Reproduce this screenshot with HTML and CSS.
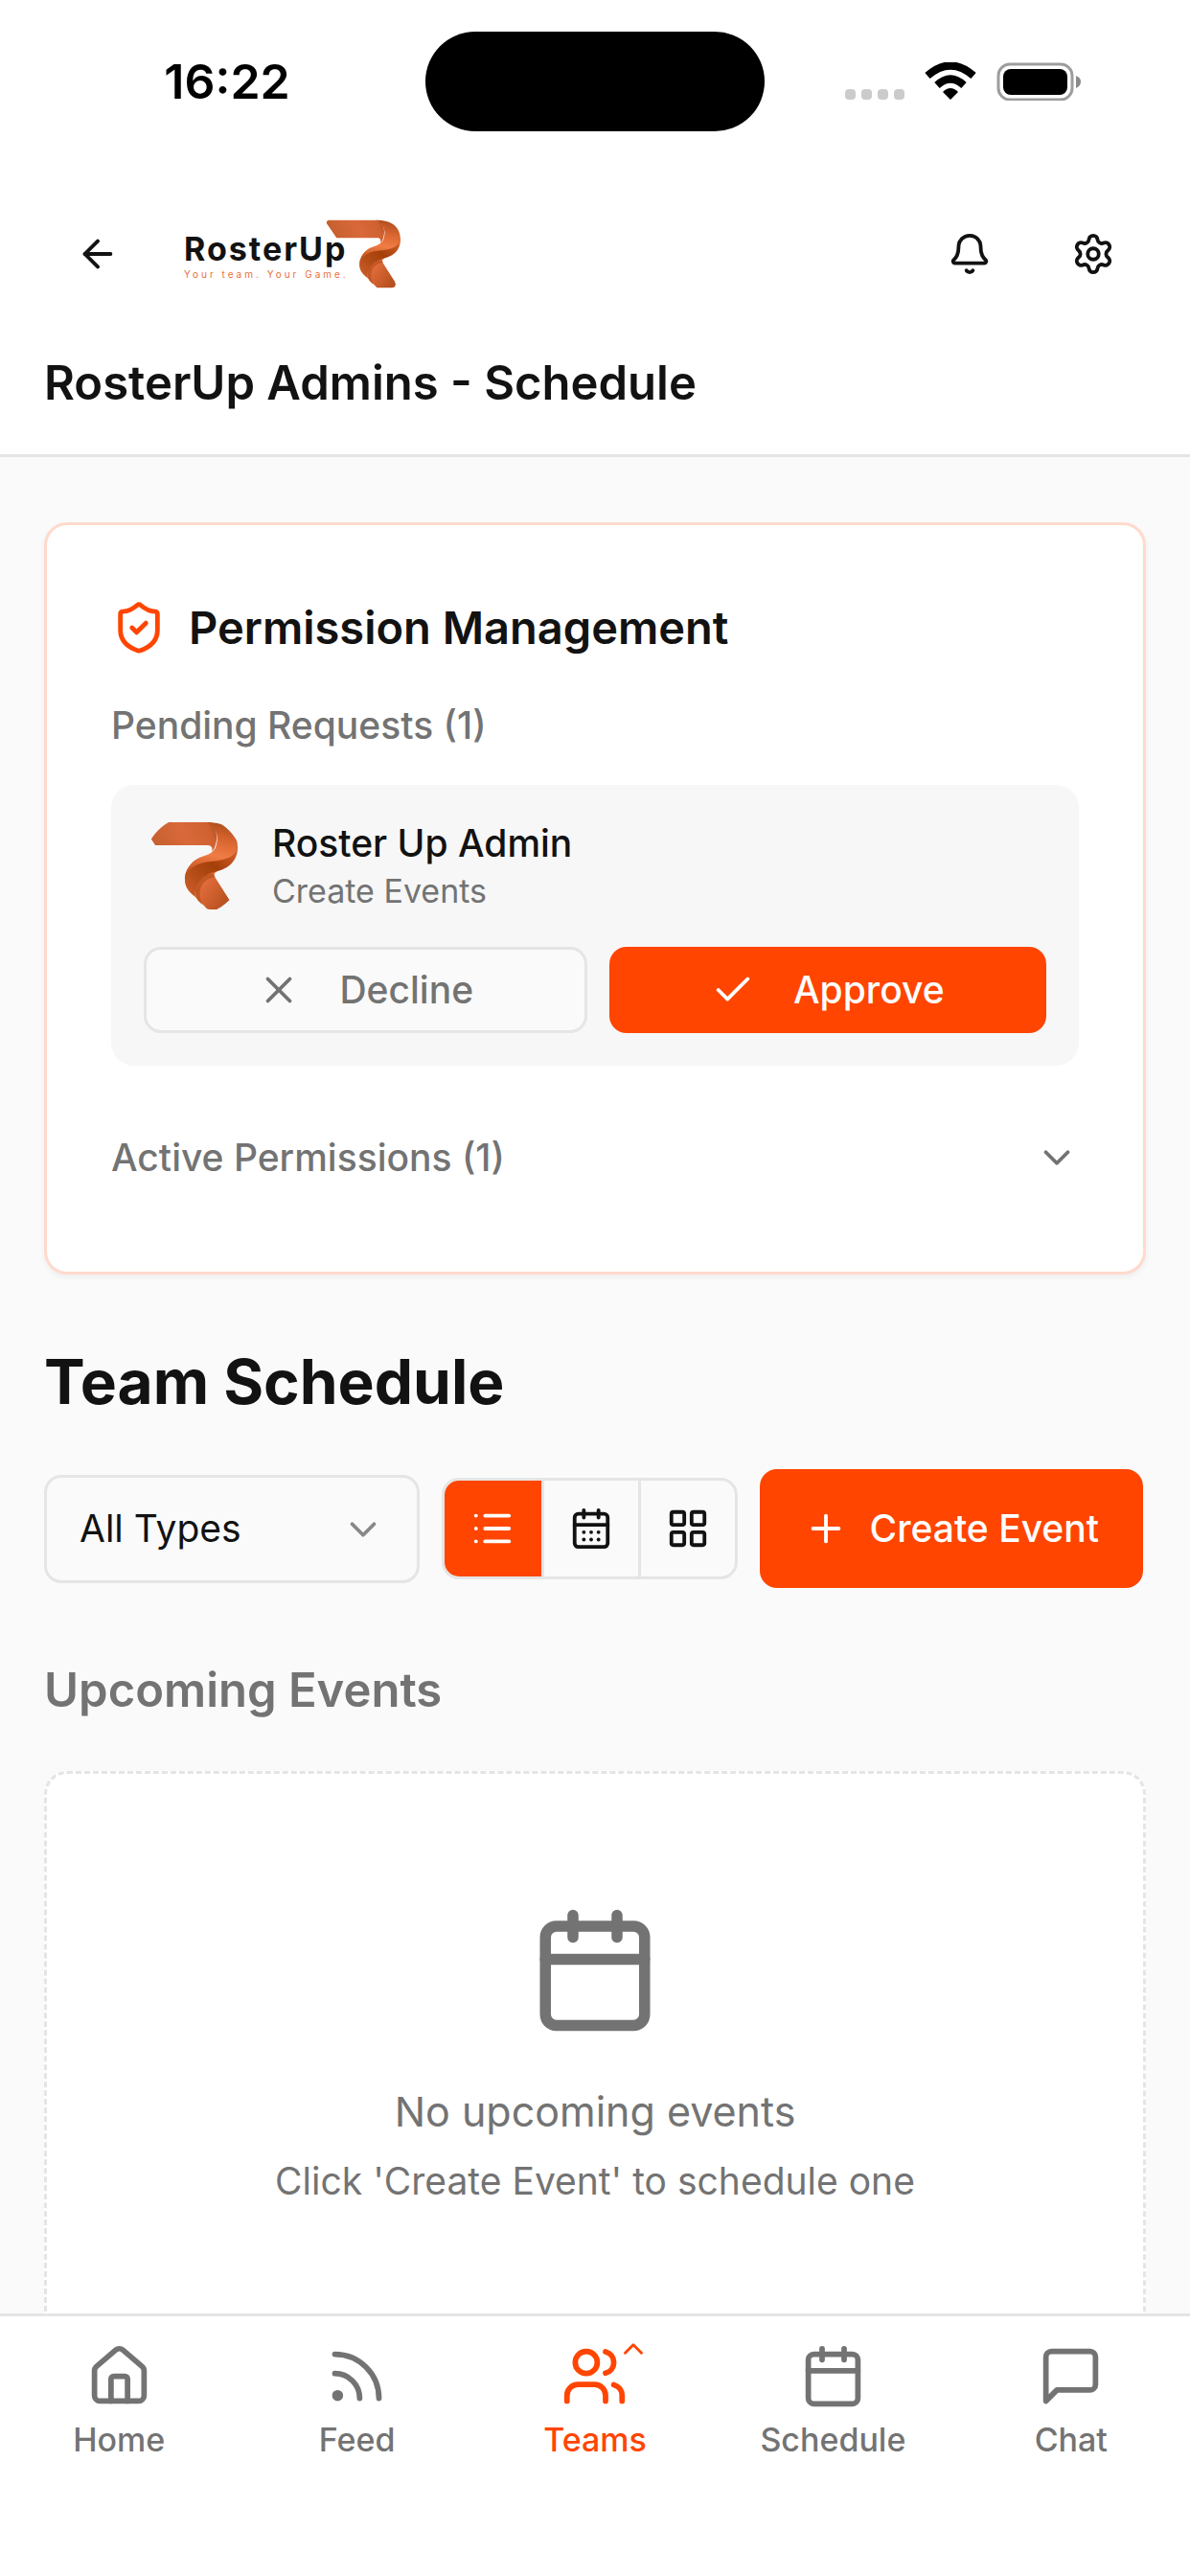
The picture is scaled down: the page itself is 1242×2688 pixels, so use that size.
FILE: index.html
```html
<!DOCTYPE html>
<html lang="en">
<head>
    <meta charset="UTF-8">
    <meta name="viewport" content="width=device-width, initial-scale=1">
    <title>RosterUp Admins - Schedule</title>
    <link rel="stylesheet" href="styles.css">
</head>
<body>
    <!-- shared ribbon mark and gradients -->
    <svg class="defs" width="0" height="0" aria-hidden="true">
        <defs>
            <linearGradient id="band" x1="0" y1="0.2" x2="1" y2="0">
                <stop offset="0" stop-color="#c4602e"/>
                <stop offset="0.5" stop-color="#d9683a"/>
                <stop offset="0.85" stop-color="#cf6130"/>
                <stop offset="1" stop-color="#a8481b"/>
            </linearGradient>
            <linearGradient id="curve" x1="0.6" y1="0" x2="0.4" y2="1">
                <stop offset="0" stop-color="#b14e1e"/>
                <stop offset="0.3" stop-color="#d8652f"/>
                <stop offset="0.62" stop-color="#f07c45"/>
                <stop offset="1" stop-color="#c4551f"/>
            </linearGradient>
            <linearGradient id="fold" x1="1" y1="0" x2="0" y2="0.8">
                <stop offset="0" stop-color="#d8652f"/>
                <stop offset="0.45" stop-color="#a53f0a"/>
                <stop offset="0.75" stop-color="#b34c16"/>
                <stop offset="1" stop-color="#c85a26"/>
            </linearGradient>
            <linearGradient id="tail" x1="0" y1="0" x2="1" y2="0.7">
                <stop offset="0" stop-color="#ee7a46"/>
                <stop offset="0.5" stop-color="#dd6a38"/>
                <stop offset="1" stop-color="#b9501f"/>
            </linearGradient>
            <symbol id="ribbon" viewBox="28 20 236 217">
                <path fill="url(#tail)" d="M134 150C138 128 205 120 212 142C204 146 203 151 207 157L243 214C250 226 246 235 235 235H194C188 235 185 232 182 228L150 196C138 184 131 170 134 150Z"/>
                <path fill="#c25824" d="M176 224C162 190 172 160 207 156L202 148C160 150 150 180 164 212Z"/>
                <path fill="url(#fold)" d="M133 162C133 128 160 112 184 105C220 95 250 90 262 82C262 118 238 136 210 142C178 150 158 166 156 202C140 190 133 178 133 162Z"/>
                <path fill="url(#curve)" d="M186 22C236 22 262 44 262 84C256 108 226 116 196 118C166 120 146 132 136 150C142 120 162 110 184 103C208 95 210 80 212 66C214 48 204 32 186 22Z"/>
                <path fill="url(#band)" d="M39 22H190C206 32 214 50 210 68C207 84 202 92 199 94C202 84 197 78 189 78H61L31 34C27 28 31 22 39 22Z"/>
            </symbol>
        </defs>
    </svg>

    <header class="header">
        <div class="status-bar">
            <span class="status-time">16:22</span>
            <span class="status-island"></span>
            <span class="status-icons">
                <svg width="62" height="40" viewBox="0 0 62 40" fill="#cbcbcb" aria-hidden="true">
                    <rect x="0" y="28" width="11" height="11" rx="4"/>
                    <rect x="17" y="28" width="11" height="11" rx="4"/>
                    <rect x="34" y="28" width="11" height="11" rx="4"/>
                    <rect x="51" y="28" width="11" height="11" rx="4"/>
                </svg>
                <svg width="54" height="40" viewBox="0 0 54 40" aria-hidden="true">
                    <path d="M27 39L19 31Q27 23 35 31Z"/>
                    <path d="M13 24Q27 11 41 24" fill="none" stroke="#000" stroke-width="8"/>
                    <path d="M3 14Q27-7 51 14" fill="none" stroke="#000" stroke-width="8"/>
                </svg>
                <svg width="88" height="40" viewBox="0 0 88 40" aria-hidden="true">
                    <rect x="2" y="2" width="77" height="37" rx="12" fill="none" stroke="#9d9d9d" stroke-width="3"/>
                    <rect x="7" y="7" width="67" height="27" rx="8"/>
                    <path d="M83 14Q88 16 88 20Q88 25 83 27Z" fill="#8a8a8a"/>
                </svg>
            </span>
        </div>
        <div class="top-bar">
            <button class="icon-button" aria-label="Back">
                <svg class="icon" viewBox="0 0 24 24"><path d="m12 19-7-7 7-7"/><path d="M19 12H5"/></svg>
            </button>
            <a class="brand" href="#">
                <span class="brand-text">
                    <span class="brand-name">RosterUp</span>
                    <span class="brand-tagline">Your team. Your Game.</span>
                </span>
                <svg class="brand-mark"><use href="#ribbon"/></svg>
            </a>
            <div class="top-actions">
                <button class="icon-button" aria-label="Notifications">
                    <svg class="icon" viewBox="0 0 24 24"><path d="M10.268 21a2 2 0 0 0 3.464 0"/><path d="M3.262 15.326A1 1 0 0 0 4 17h16a1 1 0 0 0 .74-1.673C19.41 13.956 18 12.499 18 8A6 6 0 0 0 6 8c0 4.499-1.411 5.956-2.738 7.326"/></svg>
                </button>
                <button class="icon-button" aria-label="Settings">
                    <svg class="icon" viewBox="0 0 24 24"><path d="M9.671 4.136a2.34 2.34 0 0 1 4.659 0 2.34 2.34 0 0 0 3.319 1.915 2.34 2.34 0 0 1 2.33 4.033 2.34 2.34 0 0 0 0 3.831 2.34 2.34 0 0 1-2.33 4.033 2.34 2.34 0 0 0-3.319 1.915 2.34 2.34 0 0 1-4.659 0 2.34 2.34 0 0 0-3.32-1.915 2.34 2.34 0 0 1-2.33-4.033 2.34 2.34 0 0 0 0-3.831A2.34 2.34 0 0 1 6.35 6.051a2.34 2.34 0 0 0 3.319-1.915"/><circle cx="12" cy="12" r="3"/></svg>
                </button>
            </div>
        </div>
        <h1 class="page-title">RosterUp Admins - Schedule</h1>
    </header>

    <main class="content">
        <section class="card permissions">
            <h2 class="card-title">
                <svg class="icon icon-lg" viewBox="0 0 24 24"><path d="M20 13c0 5-3.5 7.5-7.66 8.95a1 1 0 0 1-.67-.01C7.5 20.5 4 18 4 13V6a1 1 0 0 1 1-1c2 0 4.5-1.2 6.24-2.72a1.17 1.17 0 0 1 1.52 0C14.51 3.81 17 5 19 5a1 1 0 0 1 1 1z"/><path d="m9 12 2 2 4-4"/></svg>
                Permission Management
            </h2>
            <h3 class="label">Pending Requests (1)</h3>
            <div class="request">
                <div class="request-user">
                    <svg class="avatar" viewBox="0 0 104 104" aria-hidden="true">
                        <clipPath id="avatar-clip"><circle cx="52" cy="52" r="52"/></clipPath>
                        <g clip-path="url(#avatar-clip)"><use href="#ribbon" x="-2" y="6" width="101" height="93"/></g>
                    </svg>
                    <div>
                        <p class="request-name">Roster Up Admin</p>
                        <p class="request-type">Create Events</p>
                    </div>
                </div>
                <div class="request-actions">
                    <button class="button button-outline">
                        <svg class="icon" viewBox="0 0 24 24"><path d="M18 6 6 18"/><path d="m6 6 12 12"/></svg>
                        Decline
                    </button>
                    <button class="button button-primary">
                        <svg class="icon" viewBox="0 0 24 24"><path d="M20 6 9 17l-5-5"/></svg>
                        Approve
                    </button>
                </div>
            </div>
            <button class="label toggle" aria-expanded="false">
                Active Permissions (1)
                <svg class="icon" viewBox="0 0 24 24"><path d="m6 9 6 6 6-6"/></svg>
            </button>
        </section>

        <h2 class="section-title">Team Schedule</h2>
        <div class="toolbar">
            <div class="select">
                <select aria-label="Event type">
                    <option>All Types</option>
                    <option>Games</option>
                    <option>Practices</option>
                </select>
                <svg class="icon" viewBox="0 0 24 24"><path d="m6 9 6 6 6-6"/></svg>
            </div>
            <div class="view-switch">
                <button class="active" aria-label="List view">
                    <svg class="icon" viewBox="0 0 24 24"><path d="M3 5h.01"/><path d="M3 12h.01"/><path d="M3 19h.01"/><path d="M8 5h13"/><path d="M8 12h13"/><path d="M8 19h13"/></svg>
                </button>
                <button aria-label="Calendar view">
                    <svg class="icon" viewBox="0 0 24 24"><path d="M8 2v4"/><path d="M16 2v4"/><rect width="18" height="18" x="3" y="4" rx="2"/><path d="M3 10h18"/><path d="M8 14h.01"/><path d="M12 14h.01"/><path d="M16 14h.01"/><path d="M8 18h.01"/><path d="M12 18h.01"/><path d="M16 18h.01"/></svg>
                </button>
                <button aria-label="Grid view">
                    <svg class="icon" viewBox="0 0 24 24"><rect width="7" height="7" x="3" y="3" rx="1"/><rect width="7" height="7" x="14" y="3" rx="1"/><rect width="7" height="7" x="14" y="14" rx="1"/><rect width="7" height="7" x="3" y="14" rx="1"/></svg>
                </button>
            </div>
            <button class="button button-primary create">
                <svg class="icon" viewBox="0 0 24 24"><path d="M5 12h14"/><path d="M12 5v14"/></svg>
                Create Event
            </button>
        </div>

        <h3 class="events-title">Upcoming Events</h3>
        <section class="empty">
            <svg class="icon icon-xl" viewBox="0 0 24 24"><path d="M8 2v4"/><path d="M16 2v4"/><rect width="18" height="18" x="3" y="4" rx="2"/><path d="M3 10h18"/></svg>
            <p class="empty-title">No upcoming events</p>
            <p class="empty-hint">Click 'Create Event' to schedule one</p>
        </section>
    </main>

    <nav class="tab-bar">
        <a class="tab" href="#">
            <svg class="icon icon-tab" viewBox="0 0 24 24"><path d="M15 21v-8a1 1 0 0 0-1-1h-4a1 1 0 0 0-1 1v8"/><path d="M3 10a2 2 0 0 1 .709-1.528l7-5.999a2 2 0 0 1 2.582 0l7 5.999A2 2 0 0 1 21 10v9a2 2 0 0 1-2 2H5a2 2 0 0 1-2-2z"/></svg>
            Home
        </a>
        <a class="tab" href="#">
            <svg class="icon icon-tab" viewBox="0 0 24 24"><path d="M4 11a9 9 0 0 1 9 9"/><path d="M4 4a16 16 0 0 1 16 16"/><circle cx="5" cy="19" r="1"/></svg>
            Feed
        </a>
        <a class="tab active" href="#">
            <span class="tab-icon">
                <svg class="icon icon-tab" viewBox="0 0 24 24"><path d="M16 21v-2a4 4 0 0 0-4-4H6a4 4 0 0 0-4 4v2"/><path d="M16 3.128a4 4 0 0 1 0 7.744"/><path d="M22 21v-2a4 4 0 0 0-3-3.87"/><circle cx="9" cy="7" r="4"/></svg>
                <svg class="icon tab-caret" viewBox="0 0 24 24"><path d="m18 15-6-6-6 6"/></svg>
            </span>
            Teams
        </a>
        <a class="tab" href="#">
            <svg class="icon icon-tab" viewBox="0 0 24 24"><path d="M8 2v4"/><path d="M16 2v4"/><rect width="18" height="18" x="3" y="4" rx="2"/><path d="M3 10h18"/></svg>
            Schedule
        </a>
        <a class="tab" href="#">
            <svg class="icon icon-tab" viewBox="0 0 24 24"><path d="M21 15a2 2 0 0 1-2 2H7l-4 4V5a2 2 0 0 1 2-2h14a2 2 0 0 1 2 2z"/></svg>
            Chat
        </a>
    </nav>
</body>
</html>
```

FILE: styles.css
```css
* {
    box-sizing: border-box;
}

body {
    display: flex;
    flex-direction: column;
    height: 100vh;
    margin: 0;
    font-family: Inter, "Liberation Sans", sans-serif;
    font-size: 39px;
    line-height: 58px;
    color: #121212;
    background-color: #fafafa;
}

h1, h2, h3, p {
    margin: 0;
}

button, select {
    font: inherit;
    color: inherit;
    background: none;
    border: none;
    padding: 0;
    cursor: pointer;
}

a {
    color: inherit;
    text-decoration: none;
}

.defs {
    position: absolute;
}

.icon {
    flex: none;
    width: 46px;
    height: 46px;
    fill: none;
    stroke: currentColor;
    stroke-width: 2;
    stroke-linecap: round;
    stroke-linejoin: round;
}

.icon-lg {
    width: 58px;
    height: 58px;
}

.icon-xl {
    width: 138px;
    height: 138px;
}

.icon-tab {
    width: 69px;
    height: 69px;
}

/* header */

.header {
    flex: none;
    background-color: #fff;
    border-bottom: 3px solid #e5e5e5;
    padding: 0 46px 38px;
}

.status-bar {
    display: grid;
    grid-template-columns: 1fr auto 1fr;
    align-items: center;
    height: 170px;
    color: #000;
}

.status-time {
    padding-right: 16px;
    font-size: 50px;
    font-weight: 600;
    text-align: center;
}

.status-island {
    width: 354px;
    height: 104px;
    border-radius: 52px;
    background-color: #000;
}

.status-icons {
    display: flex;
    justify-content: flex-end;
    gap: 21px;
    padding-right: 68px;
}

.top-bar {
    display: flex;
    align-items: center;
    height: 115px;
    margin: 37px -2px 42px;
}

.icon-button {
    display: flex;
    align-items: center;
    justify-content: center;
    width: 115px;
    height: 115px;
}

.brand {
    display: flex;
    align-items: flex-end;
    margin-left: 33px;
}

.brand-text {
    display: flex;
    flex-direction: column;
    padding-bottom: 8px;
}

.brand-name {
    font-size: 34px;
    font-weight: 700;
    line-height: 38px;
    letter-spacing: 2px;
}

.brand-tagline {
    font-size: 10px;
    line-height: 14px;
    letter-spacing: 3px;
    color: #e8703c;
}

/* the ribbon hangs over the end of the wordmark */
.brand-mark {
    width: 79px;
    height: 72px;
    margin-left: -24px;
}

.top-actions {
    display: flex;
    gap: 14px;
    margin-left: auto;
}

.page-title {
    font-size: 49px;
    font-weight: 600;
    line-height: 72px;
}

/* content */

.content {
    flex: 1;
    min-height: 0;
    overflow-y: auto;
    scrollbar-width: none;
    padding: 68px 46px;
}

.card {
    display: flex;
    flex-direction: column;
    background-color: #fff;
    border: 3px solid #ffdacc;
    border-radius: 24px;
    padding: 67px;
    box-shadow: 0 3px 6px rgba(0, 0, 0, 0.05);
}

.card-title {
    display: flex;
    align-items: center;
    gap: 23px;
    font-size: 47px;
    font-weight: 600;
    line-height: 80px;
}

.card-title .icon {
    color: #ff4500;
}

.label {
    font-size: 39px;
    font-weight: 500;
    color: #737373;
}

.permissions > .label {
    margin-top: 33px;
}

.request {
    margin-top: 33px;
    padding: 32px 34px 34px;
    border-radius: 24px;
    background-color: #f7f7f7;
}

.request-user {
    display: flex;
    align-items: center;
    gap: 30px;
}

.avatar {
    width: 104px;
    height: 104px;
}

.request-name {
    font-weight: 500;
    line-height: 54px;
}

.request-type {
    font-size: 34px;
    line-height: 46px;
    color: #737373;
}

.request-actions {
    display: flex;
    gap: 23px;
    margin-top: 33px;
}

.button {
    display: flex;
    align-items: center;
    justify-content: center;
    gap: 40px;
    height: 90px;
    border-radius: 18px;
    font-weight: 500;
}

.request-actions .button {
    flex: 1;
}

.button-outline {
    border: 3px solid #e5e5e5;
    background-color: #fafafa;
    color: #737373;
}

.button-primary {
    background-color: #ff4500;
    color: #fff;
}

.permissions > .toggle {
    display: flex;
    align-items: center;
    justify-content: space-between;
    margin-top: 44px;
    padding: 23px 0;
}

.section-title {
    margin-top: 70px;
    font-size: 64px;
    font-weight: 700;
    line-height: 84px;
}

.toolbar {
    display: flex;
    align-items: center;
    gap: 23px;
    margin-top: 49px;
    padding-right: 3px;
}

.select {
    position: relative;
    flex: 1;
}

.select select {
    appearance: none;
    width: 100%;
    height: 113px;
    padding: 0 34px;
    border: 3px solid #e5e5e5;
    border-radius: 18px;
}

.select .icon {
    position: absolute;
    top: 34px;
    right: 36px;
    color: #888;
    pointer-events: none;
}

.view-switch {
    display: flex;
    height: 106px;
    border: 3px solid #e5e5e5;
    border-radius: 18px;
    overflow: hidden;
}

.view-switch button {
    display: flex;
    align-items: center;
    justify-content: center;
    width: 101px;
}

.view-switch button + button {
    border-left: 3px solid #e5e5e5;
}

.view-switch .active {
    background-color: #ff4500;
    color: #fff;
}

.create {
    gap: 23px;
    height: 124px;
    padding: 0 46px;
}

.events-title {
    margin-top: 77px;
    font-size: 49px;
    font-weight: 600;
    line-height: 60px;
    color: #737373;
}

.empty {
    display: flex;
    flex-direction: column;
    align-items: center;
    margin-top: 54px;
    padding: 136px 69px;
    border: 3px dashed #e5e5e5;
    border-radius: 24px;
    background-color: #fff;
    color: #737373;
}

.empty-title {
    margin-top: 46px;
    font-size: 43px;
    line-height: 64px;
}

.empty-hint {
    margin-top: 12px;
}

/* bottom tabs */

.tab-bar {
    flex: none;
    display: grid;
    grid-template-columns: repeat(5, 1fr);
    padding: 28px 0 120px;
    border-top: 3px solid #e5e5e5;
    background-color: #fff;
}

.tab {
    display: flex;
    flex-direction: column;
    align-items: center;
    gap: 10px;
    font-size: 34px;
    font-weight: 500;
    line-height: 44px;
    color: #737373;
}

.tab.active {
    color: #ff4500;
}

.tab-icon {
    position: relative;
    display: flex;
}

.tab-caret {
    position: absolute;
    top: -11px;
    right: -23px;
    width: 34px;
    height: 34px;
}
```
